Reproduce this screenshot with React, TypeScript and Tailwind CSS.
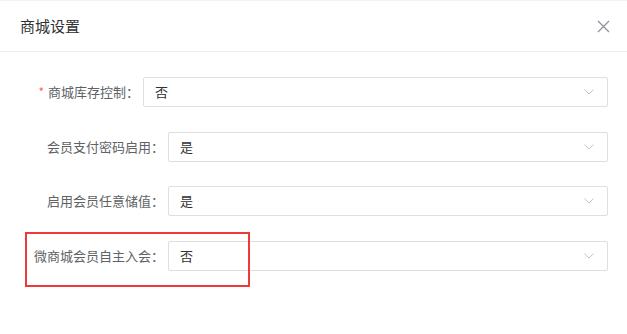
export default function App() {
  const rows = [
    { label: "商城库存控制：", value: "否", required: true, labelW: "w-[143px]" },
    { label: "会员支付密码启用：", value: "是", required: false, labelW: "w-[168px]" },
    { label: "启用会员任意储值：", value: "是", required: false, labelW: "w-[168px]" },
    { label: "微商城会员自主入会：", value: "否", required: false, labelW: "w-[168px]" },
  ];

  return (
    <div
      className="w-[627px] h-[334px] bg-white relative overflow-hidden"
      style={{ fontFamily: '"Noto Sans CJK SC", "Noto Sans", sans-serif' }}
    >
      <div className="h-[52px] border-t border-[#f2f2f2] border-b border-b-[#ebeef5] flex items-center justify-between pl-5 pr-4">
        <span className="text-[15px] text-[#303133]">商城设置</span>
        <svg width="13" height="13" viewBox="0 0 13 13" className="mr-[1px]">
          <path d="M1 1L12 12M12 1L1 12" stroke="#909399" strokeWidth="1.3" fill="none" />
        </svg>
      </div>

      <div className="flex flex-col gap-[24.5px] pt-[25px]">
        {rows.map((row, idx) => (
          <div key={idx} className="flex items-center">
            <div className={`${row.labelW} shrink-0 flex justify-end items-center pr-[4px] text-[13px] text-[#606266]`}>
              {row.required && <span className="text-[#f56c6c] mr-[4px] text-[12px]">*</span>}
              {row.label}
            </div>
            <div className="flex-1 mr-[19px] h-[30px] border border-[#dcdfe6] rounded-[2px] flex items-center justify-between pl-[11px] pr-[13px]">
              <span className="text-[13px] text-[#303133]">{row.value}</span>
              <svg width="10" height="6" viewBox="0 0 10 6">
                <path d="M0.5 0.5L5 5L9.5 0.5" stroke="#c0c4cc" strokeWidth="1" fill="none" />
              </svg>
            </div>
          </div>
        ))}
      </div>

      {/* highlight box */}
      <div className="absolute left-[25px] top-[232px] w-[225px] h-[55px] border-2 border-[#f03a3a]"></div>
    </div>
  );
}
